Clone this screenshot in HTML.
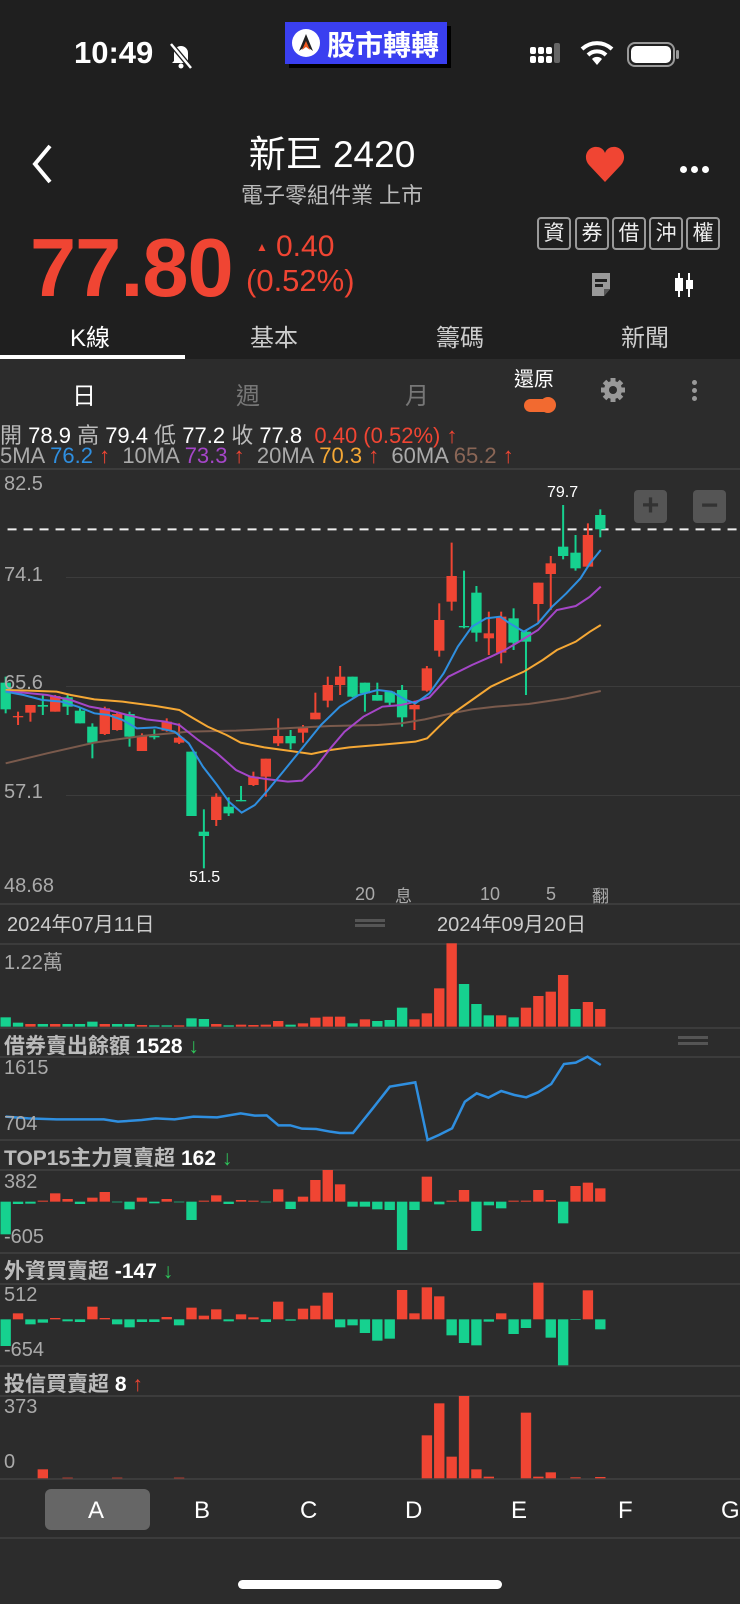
<!DOCTYPE html>
<html><head><meta charset="utf-8">
<style>
*{margin:0;padding:0;box-sizing:border-box}
body{width:740px;height:1604px;background:#2c2c2c;position:relative;overflow:hidden;font-family:"Liberation Sans","Noto Sans CJK TC",sans-serif;color:#fff}
.a{position:absolute;white-space:nowrap}
.hdr{position:absolute;left:0;top:0;width:740px;height:359px;background:#1f1f1f}
.btn{position:absolute;top:217px;width:34px;height:33px;border:2px solid #999;border-radius:4px;font-size:21px;line-height:29px;text-align:center;color:#eee}
.tab{position:absolute;top:318px;font-size:24px;color:#ccc}
.lbl{font-size:20px;color:#aaa}
.pt{font-size:21px;color:#bbb;font-weight:bold}
.hl{position:absolute;left:0;width:740px;height:2px;background:#3c3c3c}
.r{color:#f04533}.g{color:#2ec55a}
</style></head><body>
<div class="hdr"></div>
<!-- status bar -->
<div class="a" style="left:74px;top:35px;font-size:31px;font-weight:bold">10:49</div>
<svg class="a" style="left:167px;top:40px" width="28" height="30" viewBox="0 0 28 30"><path d="M7 21 V13 a7 7 0 0 1 14 0 V21 L23 23 H5 Z" fill="#fff"/><circle cx="14" cy="26" r="2.5" fill="#fff"/><line x1="4" y1="4" x2="24" y2="28" stroke="#1f1f1f" stroke-width="5"/><line x1="4" y1="4" x2="24" y2="28" stroke="#fff" stroke-width="2.5"/></svg>
<div class="a" style="left:289px;top:26px;width:162px;height:42px;background:#000"></div>
<div class="a" style="left:285px;top:22px;width:162px;height:42px;background:#3a3ff0"></div>
<div class="a" style="left:292px;top:29px;width:28px;height:28px;border-radius:50%;background:#fff"></div>
<svg class="a" style="left:297px;top:33px" width="18" height="20" viewBox="0 0 18 20"><path d="M9 1 L16 18 L9 13 L2 18 Z" fill="#222"/><path d="M9 8 L13 17 L9 14 L5 17Z" fill="#f05a20"/></svg>
<div class="a" style="left:327px;top:24px;font-size:28px;font-weight:bold">股市轉轉</div>
<svg class="a" style="left:530px;top:42px" width="40" height="24"><g fill="#fff"><rect x="0" y="14" width="6" height="7" rx="2"/><rect x="8" y="14" width="6" height="7" rx="2"/><rect x="16" y="14" width="6" height="7" rx="2"/><rect x="0" y="5" width="6" height="7" rx="2"/><rect x="8" y="5" width="6" height="7" rx="2"/></g><rect x="24" y="1" width="6" height="20" rx="2" fill="#666"/><rect x="16" y="5" width="6" height="7" rx="2" fill="#fff"/></svg>
<svg class="a" style="left:580px;top:40px" width="34" height="26" viewBox="0 0 34 26"><path d="M2 9 A22 22 0 0 1 32 9" stroke="#fff" stroke-width="4" fill="none"/><path d="M8 15 A13 13 0 0 1 26 15" stroke="#fff" stroke-width="4" fill="none"/><path d="M17 25 L12 19 A7 7 0 0 1 22 19 Z" fill="#fff"/></svg>
<div class="a" style="left:627px;top:42px;width:48px;height:25px;border:2px solid #999;border-radius:8px"></div>
<div class="a" style="left:631px;top:46px;width:40px;height:17px;background:#fff;border-radius:5px"></div>
<div class="a" style="left:676px;top:50px;width:3px;height:9px;background:#999;border-radius:2px"></div>
<!-- title -->
<svg class="a" style="left:28px;top:143px" width="28" height="42"><path d="M22 3 L7 21 L22 39" stroke="#fff" stroke-width="4" fill="none"/></svg>
<div class="a" style="left:0;width:664px;text-align:center;top:124px;font-size:37px">新巨 2420</div>
<div class="a" style="left:0;width:664px;text-align:center;top:178px;font-size:22px;color:#bbb">電子零組件業 上市</div>
<svg class="a" style="left:585px;top:145px" width="40" height="38" viewBox="0 0 40 38"><path d="M20 37 L4 20 C-3 12 3 1 12 2 C16 2 19 5 20 8 C21 5 24 2 28 2 C37 1 43 12 36 20 Z" fill="#f04533"/></svg>
<div class="a" style="left:680px;top:160px"><span style="display:inline-block;width:7px;height:7px;border-radius:50%;background:#fff;margin-right:4px"></span><span style="display:inline-block;width:7px;height:7px;border-radius:50%;background:#fff;margin-right:4px"></span><span style="display:inline-block;width:7px;height:7px;border-radius:50%;background:#fff"></span></div>
<div class="btn" style="left:537px">資</div><div class="btn" style="left:575px">券</div><div class="btn" style="left:612px">借</div><div class="btn" style="left:649px">沖</div><div class="btn" style="left:686px">權</div>
<div class="a r" style="left:30px;top:220px;font-size:83px;font-weight:bold;letter-spacing:-1px">77.80</div>
<div class="a r" style="left:256px;top:240px;font-size:12px">▲</div>
<div class="a r" style="left:276px;top:230px;font-size:30px">0.40</div>
<div class="a r" style="left:246px;top:263px;font-size:31px">(0.52%)</div>
<svg class="a" style="left:589px;top:272px" width="24" height="26"><path d="M3 1 H21 V17 L15 24 H3 Z" fill="#999"/><path d="M15 24 V17 H21" fill="#555"/><rect x="6" y="7" width="12" height="3" fill="#1f1f1f"/><rect x="6" y="12" width="8" height="3" fill="#1f1f1f"/></svg>
<svg class="a" style="left:674px;top:272px" width="20" height="26"><line x1="5" y1="1" x2="5" y2="25" stroke="#fff" stroke-width="2"/><rect x="1" y="6" width="8" height="13" fill="#fff"/><line x1="15" y1="1" x2="15" y2="25" stroke="#fff" stroke-width="2"/><rect x="12" y="8" width="7" height="9" fill="#fff"/></svg>
<div class="tab" style="left:70px;color:#fff">K線</div>
<div class="tab" style="left:250px">基本</div>
<div class="tab" style="left:436px">籌碼</div>
<div class="tab" style="left:621px">新聞</div>
<div class="a" style="left:0;top:355px;width:185px;height:4px;background:#fff"></div>
<!-- chart toolbar -->
<div class="a" style="left:72px;top:376px;font-size:24px">日</div>
<div class="a" style="left:236px;top:376px;font-size:24px;color:#777">週</div>
<div class="a" style="left:405px;top:376px;font-size:24px;color:#777">月</div>
<div class="a" style="left:514px;top:363px;font-size:20px">還原</div>
<div class="a" style="left:524px;top:399px;width:28px;height:13px;border-radius:7px;background:#f26a30"></div>
<div class="a" style="left:540px;top:397px;width:16px;height:16px;border-radius:50%;background:#f26a30"></div>
<svg class="a" style="left:600px;top:377px" width="26" height="26" viewBox="0 0 26 26"><g fill="#999"><circle cx="13" cy="13" r="9"/><g stroke="#999" stroke-width="5"><line x1="13" y1="1" x2="13" y2="25"/><line x1="1" y1="13" x2="25" y2="13"/><line x1="4.5" y1="4.5" x2="21.5" y2="21.5"/><line x1="21.5" y1="4.5" x2="4.5" y2="21.5"/></g></g><circle cx="13" cy="13" r="4" fill="#2c2c2c"/></svg>
<div class="a" style="left:692px;top:380px;width:5px;height:5px;border-radius:50%;background:#999"></div>
<div class="a" style="left:692px;top:388px;width:5px;height:5px;border-radius:50%;background:#999"></div>
<div class="a" style="left:692px;top:396px;width:5px;height:5px;border-radius:50%;background:#999"></div>
<div class="a" style="left:0;top:418px;font-size:22px;color:#bbb">開 <span style="color:#fff">78.9</span> 高 <span style="color:#fff">79.4</span> 低 <span style="color:#fff">77.2</span> 收 <span style="color:#fff">77.8</span> &nbsp;<span class="r">0.40 (0.52%) ↑</span></div>
<div class="a" style="left:0;top:443px;font-size:22px;color:#aaa">5MA <span style="color:#2f8fe0">76.2</span> <span class="r">↑</span> &nbsp;10MA <span style="color:#a546c8">73.3</span> <span class="r">↑</span> &nbsp;20MA <span style="color:#f5a835">70.3</span> <span class="r">↑</span> &nbsp;60MA <span style="color:#8a6656">65.2</span> <span class="r">↑</span></div>
<!-- chart frame lines -->
<div class="hl" style="top:468px"></div>
<div class="a" style="left:66px;top:577px;width:674px;height:1px;background:#3c3c3c"></div>
<div class="a" style="left:66px;top:686px;width:674px;height:1px;background:#3c3c3c"></div>
<div class="a" style="left:66px;top:795px;width:674px;height:1px;background:#3c3c3c"></div>
<div class="hl" style="top:903px"></div>
<div class="hl" style="top:943px"></div>
<div class="hl" style="top:1027px"></div>
<div class="hl" style="top:1056px"></div>
<div class="hl" style="top:1139px"></div>
<div class="hl" style="top:1169px"></div>
<div class="hl" style="top:1252px"></div>
<div class="hl" style="top:1283px"></div>
<div class="hl" style="top:1365px"></div>
<div class="hl" style="top:1395px"></div>
<div class="hl" style="top:1478px"></div>
<div class="hl" style="top:1537px"></div>
<svg class="a" id="s1" style="left:0;top:460px" width="740" height="450" viewBox="0 0 1568 1350" preserveAspectRatio="none"></svg>
<svg class="a" id="s2" style="left:0;top:900px" width="740" height="350" viewBox="0 0 1568 1050" preserveAspectRatio="none"></svg>
<svg class="a" id="s3" style="left:0;top:1240px" width="740" height="364" viewBox="0 0 1568 1092" preserveAspectRatio="none"></svg>
<!-- chart labels -->
<div class="a lbl" style="left:4px;top:473px">82.5</div>
<div class="a lbl" style="left:4px;top:564px">74.1</div>
<div class="a lbl" style="left:4px;top:672px">65.6</div>
<div class="a lbl" style="left:4px;top:781px">57.1</div>
<div class="a lbl" style="left:4px;top:875px">48.68</div>
<div class="a" style="left:547px;top:484px;font-size:16px">79.7</div>
<div class="a" style="left:189px;top:869px;font-size:16px">51.5</div>
<div class="a" style="left:634px;top:490px;width:33px;height:33px;background:#555;border-radius:4px;color:#333;font-size:30px;line-height:31px;text-align:center;font-weight:bold">+</div>
<div class="a" style="left:693px;top:490px;width:33px;height:33px;background:#555;border-radius:4px;color:#333;font-size:30px;line-height:31px;text-align:center;font-weight:bold">−</div>
<div class="a" style="left:355px;top:884px;font-size:18px;color:#aaa">20</div>
<div class="a" style="left:395px;top:882px;font-size:17px;color:#aaa">息</div>
<div class="a" style="left:480px;top:884px;font-size:18px;color:#aaa">10</div>
<div class="a" style="left:546px;top:884px;font-size:18px;color:#aaa">5</div>
<div class="a" style="left:592px;top:882px;font-size:17px;color:#aaa">翻</div>
<div class="a" style="left:7px;top:908px;font-size:20px;color:#ccc">2024年07月11日</div>
<div class="a" style="left:437px;top:908px;font-size:20px;color:#ccc">2024年09月20日</div>
<div class="a" style="left:355px;top:919px;width:30px;height:3px;background:#555"></div>
<div class="a" style="left:355px;top:924px;width:30px;height:3px;background:#555"></div>
<div class="a" style="left:4px;top:946px;font-size:20px;color:#aaa">1.22萬</div>
<div class="a pt" style="left:4px;top:1030px">借券賣出餘額 <span style="color:#fff">1528</span> <span class="g">↓</span></div>
<div class="a" style="left:678px;top:1036px;width:30px;height:3px;background:#555"></div>
<div class="a" style="left:678px;top:1042px;width:30px;height:3px;background:#555"></div>
<div class="a lbl" style="left:4px;top:1057px">1615</div>
<div class="a lbl" style="left:4px;top:1113px">704</div>
<div class="a pt" style="left:4px;top:1142px">TOP15主力買賣超 <span style="color:#fff">162</span> <span class="g">↓</span></div>
<div class="a lbl" style="left:4px;top:1171px">382</div>
<div class="a lbl" style="left:4px;top:1226px">-605</div>
<div class="a pt" style="left:4px;top:1255px">外資買賣超 <span style="color:#fff">-147</span> <span class="g">↓</span></div>
<div class="a lbl" style="left:4px;top:1284px">512</div>
<div class="a lbl" style="left:4px;top:1339px">-654</div>
<div class="a pt" style="left:4px;top:1368px">投信買賣超 <span style="color:#fff">8</span> <span class="r">↑</span></div>
<div class="a lbl" style="left:4px;top:1396px">373</div>
<div class="a lbl" style="left:4px;top:1451px">0</div>
<!-- bottom bar -->
<div class="a" style="left:45px;top:1489px;width:105px;height:41px;background:#666;border-radius:6px"></div>
<div class="a" style="left:88px;top:1497px;font-size:24px">A</div>
<div class="a" style="left:194px;top:1497px;font-size:24px">B</div>
<div class="a" style="left:300px;top:1497px;font-size:24px">C</div>
<div class="a" style="left:405px;top:1497px;font-size:24px">D</div>
<div class="a" style="left:511px;top:1497px;font-size:24px">E</div>
<div class="a" style="left:618px;top:1497px;font-size:24px">F</div>
<div class="a" style="left:721px;top:1497px;font-size:24px">G</div>
<div class="a" style="left:238px;top:1580px;width:264px;height:9px;background:#fff;border-radius:5px"></div>
<script>
var R="#f04533",G="#16d18f",NS="http://www.w3.org/2000/svg";
function el(s,t,a){var e=document.createElementNS(NS,t);for(var k in a)e.setAttribute(k,a[k]);if(t=="polyline"||t=="line")e.setAttribute("vector-effect","non-scaling-stroke");s.appendChild(e);return e}
function X(i){return 12+i*26.25}
var s1=document.getElementById("s1"),s2=document.getElementById("s2"),s3=document.getElementById("s3");
el(s1,"line",{x1:16,y1:208,x2:1568,y2:208,stroke:"#eee","stroke-width":2,"stroke-dasharray":"9 7"});
var C=[["g",668,748,650,760],["r",768,772,755,795],["r",735,758,735,785],["g",735,740,705,765],["r",708,755,705,755],["g",712,740,705,765],["g",752,790,745,790],["g",800,848,790,895],["r",745,822,740,825],["r",762,810,755,812],["g",762,830,755,860],["r",828,873,820,873],["g",828,832,808,838],["r",785,812,775,815],["r",833,848,790,852],["g",875,1068,875,1068],["g",1115,1128,1048,1225],["r",1010,1080,1000,1098],["g",1040,1060,1012,1068],["g",1020,1024,978,1024],["r",950,975,935,978],["r",896,950,896,1010],["r",828,850,775,858],["g",828,850,810,868],["r",803,818,795,848],["r",758,778,698,778],["r",675,722,650,742],["r",650,675,618,705],["g",650,710,650,712],["g",668,700,668,755],["g",705,722,668,722],["g",695,728,695,735],["g",690,772,675,800],["r",735,748,722,810],["r",625,692,618,695],["r",480,572,430,590],["r",348,425,248,452],["g",498,502,332,505],["g",398,518,378,545],["r",520,535,455,585],["r",470,578,455,610],["g",475,548,445,570],["g",515,545,510,705],["r",368,432,368,490],["r",310,342,288,450],["g",260,288,135,298],["g",278,325,225,332],["r",225,320,190,322],["g",165,208,148,232]];
C.forEach(function(c,i){var x=X(i),col=c[0]=="r"?R:G;el(s1,"line",{x1:x,y1:c[3],x2:x,y2:c[4],stroke:col,"stroke-width":2});el(s1,"rect",{x:x-11,y:c[1],width:22,height:Math.max(c[2]-c[1],4),fill:col});});
function pl(s,pts,col,w){el(s,"polyline",{points:pts,fill:"none",stroke:col,"stroke-width":w||2})}
pl(s1,"12,910 100,880 200,848 300,828 400,815 500,812 600,805 700,798 800,795 850,790 900,778 950,762 1000,748 1050,740 1120,732 1200,715 1273,693","#7a5a4c");
pl(s1,"12,690 60,692 120,695 150,705 200,718 260,725 330,738 380,750 410,775 440,800 480,825 510,848 560,862 610,872 660,882 700,870 740,862 800,855 840,850 880,845 905,835 930,800 960,760 1000,720 1040,680 1070,660 1110,635 1150,600 1180,570 1220,545 1250,515 1273,495","#f5a835");
pl(s1,"12,695 50,698 100,705 150,720 190,740 230,750 270,765 310,778 350,785 380,795 420,840 460,880 500,930 530,950 570,958 610,965 640,962 670,920 700,865 730,815 770,770 810,740 850,735 880,725 910,712 950,650 1000,615 1040,590 1070,570 1100,545 1140,510 1180,450 1220,438 1250,410 1273,380","#a546c8");
pl(s1,"12,695 50,705 90,720 130,725 165,740 200,760 230,765 260,780 290,805 330,802 370,815 400,850 430,920 460,975 485,1025 512,1058 540,1035 565,995 600,935 640,865 680,795 720,740 760,705 800,690 830,695 860,720 880,730 910,700 940,640 970,560 1000,500 1030,475 1060,470 1080,490 1110,515 1140,490 1170,440 1200,400 1230,355 1250,310 1273,270","#2f8fe0");
var V=[["g",352],["g",368],["r",372],["g",372],["r",372],["g",372],["g",372],["g",365],["r",372],["g",372],["g",372],["r",375],["g",376],["g",376],["r",376],["g",355],["g",357],["r",372],["g",376],["r",374],["r",375],["r",374],["r",363],["g",374],["r",370],["r",353],["r",350],["r",350],["g",370],["r",358],["g",363],["g",360],["g",323],["r",358],["r",340],["r",265],["r",130],["g",252],["g",312],["g",346],["r",346],["g",352],["r",323],["r",288],["r",275],["r",225],["g",327],["r",306],["r",327]];
V.forEach(function(v,i){el(s2,"rect",{x:X(i)-11,y:v[1],width:22,height:380-v[1],fill:v[0]=="r"?R:G})});
pl(s2,"12,650 60,655 120,658 220,658 250,665 300,660 330,655 370,658 410,650 460,652 510,640 540,647 565,646 590,676 615,676 640,686 670,687 700,695 720,699 748,699 790,625 826,560 880,547 906,720 930,705 958,685 985,605 1010,580 1035,593 1062,573 1090,585 1115,592 1140,577 1168,552 1195,492 1220,488 1245,470 1273,495","#2f8fe0",2.5);
function bars(s,z,arr){arr.forEach(function(v,i){if(v==null)return;var t=Math.min(v,z),b=Math.max(v,z);el(s,"rect",{x:X(i)-11,y:t,width:22,height:Math.max(b-t,2),fill:v<z?R:G})})}
bars(s2,905,[1003,912,911,902,880,897,912,893,876,907,928,893,910,897,907,960,902,886,912,900,902,906,868,927,890,840,810,853,920,920,928,930,1050,930,830,913,902,870,993,916,925,902,902,870,900,970,858,848,865]);
bars(s3,238,[318,220,253,248,234,244,246,200,234,253,262,246,246,231,256,203,227,208,244,223,232,246,185,242,206,197,158,262,256,279,302,296,150,220,142,169,286,309,316,245,220,282,264,128,293,376,239,151,268]);
var T=[];for(var i=0;i<49;i++)T.push(null);
T[3]=688;T[5]=713;T[9]=713;T[14]=713;T[34]=586;T[35]=490;T[36]=650;T[37]=468;T[38]=688;T[39]=710;T[42]=518;T[43]=710;T[44]=697;T[46]=712;T[48]=711;
bars(s3,715,T);
</script>
</body></html>
